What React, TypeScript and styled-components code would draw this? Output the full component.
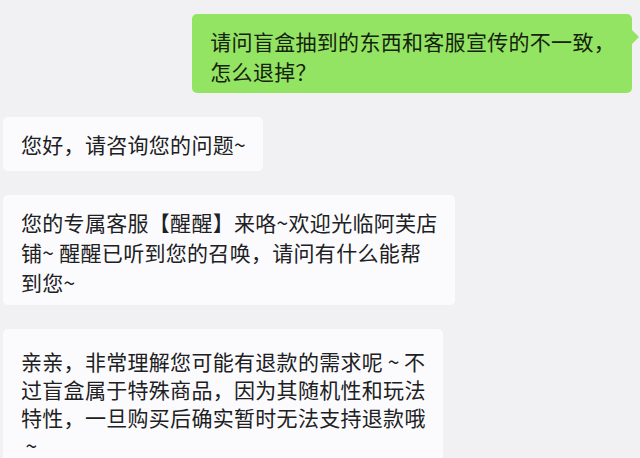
import React from "react";
import styled, { createGlobalStyle } from "styled-components";

const GlobalStyle = createGlobalStyle`
  html, body {
    margin: 0;
    padding: 0;
    background: #f1f1f3;
  }
  body {
    font-family: "Noto Sans CJK SC", "Noto Sans", sans-serif;
  }
`;

const Chat = styled.div`
  display: flex;
  flex-direction: column;
  align-items: flex-start;
  gap: 24px;
  padding: 14px 8px 0 3px;
  height: 458px;
  box-sizing: border-box;
  overflow: hidden;
`;

const Bubble = styled.div<{
  $mine?: boolean;
  $padTop?: number;
  $padBottom?: number;
  $lineHeight?: number;
}>`
  position: relative;
  box-sizing: border-box;
  width: fit-content;
  padding: ${(p) => p.$padTop ?? 12}px 17px ${(p) => p.$padBottom ?? 12}px 18px;
  border-radius: 5px;
  font-size: 21px;
  letter-spacing: 0.3px;
  line-height: ${(p) => p.$lineHeight ?? 30}px;
  white-space: nowrap;
  color: ${(p) => (p.$mine ? "#15220e" : "#202022")};
  background: ${(p) => (p.$mine ? "#93e462" : "#fbfbfd")};
  align-self: ${(p) => (p.$mine ? "flex-end" : "flex-start")};
  flex-shrink: 0;

  ${(p) =>
    p.$mine &&
    `
    &::after {
      content: "";
      position: absolute;
      top: 16px;
      right: -7px;
      border-top: 7px solid transparent;
      border-bottom: 7px solid transparent;
      border-left: 7px solid #93e462;
    }
  `}
`;

const Line = styled.span`
  display: block;
`;

// full-width tilde drawn as a small centred "~"
const Tilde = styled.span`
  display: inline-block;
  width: 1em;
  text-align: center;
`;

type Message = {
  mine?: boolean;
  lines: React.ReactNode[];
  padTop?: number;
  padBottom?: number;
  lineHeight?: number;
};

const messages: Message[] = [
  {
    mine: true,
    padBottom: 7,
    lines: ["请问盲盒抽到的东西和客服宣传的不一致，", "怎么退掉？"],
  },
  { lines: ["您好，请咨询您的问题~"] },
  {
    padBottom: 8,
    lines: [
      "您的专属客服【醒醒】来咯~欢迎光临阿芙店",
      "铺~ 醒醒已听到您的召唤，请问有什么能帮",
      "到您~",
    ],
  },
  {
    padTop: 18,
    lineHeight: 28,
    lines: [
      <>
        亲亲，非常理解您可能有退款的需求呢<Tilde>~</Tilde>不
      </>,
      "过盲盒属于特殊商品，因为其随机性和玩法",
      "特性，一旦购买后确实暂时无法支持退款哦",
      <Tilde>~</Tilde>,
    ],
  },
];

const App: React.FC = () => {
  return (
    <>
      <GlobalStyle />
      <Chat>
        {messages.map((m, i) => (
          <Bubble
            key={i}
            $mine={m.mine}
            $padTop={m.padTop}
            $padBottom={m.padBottom}
            $lineHeight={m.lineHeight}
          >
            {m.lines.map((l, j) => (
              <Line key={j}>{l}</Line>
            ))}
          </Bubble>
        ))}
      </Chat>
    </>
  );
};

export default App;
